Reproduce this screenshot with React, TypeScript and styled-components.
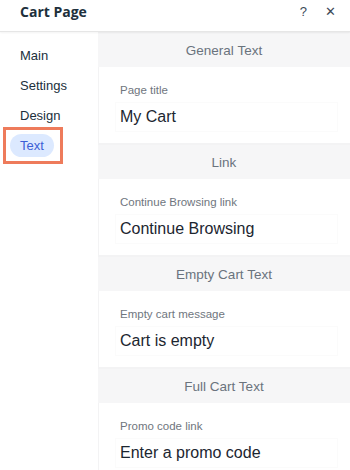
import styled, {createGlobalStyle} from "styled-components";

const GlobalStyle = createGlobalStyle`
  html, body {
    margin: 0;
    padding: 0;
    background: #ffffff;
    font-family: "Liberation Sans", Arial, sans-serif;
  }
`;

const Panel = styled.div`
  width: 350px;
  height: 470px;
  display: flex;
  flex-direction: column;
  overflow: hidden;
  background: #ffffff;
`;

const Header = styled.div`
  height: 31px;
  flex-shrink: 0;
  display: flex;
  align-items: center;
  padding: 0 14px 0 20px;
  border-bottom: 1px solid #e6e6e6;
  box-shadow: 0 1px 2px rgba(0, 0, 0, 0.05);
  position: relative;
  z-index: 1;
`;

const Title = styled.div`
  flex: 1;
  font-family: "Open Sans", "Liberation Sans", sans-serif;
  font-weight: 700;
  font-size: 14px;
  color: #20303c;
  margin-top: -8px;
`;

const HeaderBtn = styled.span`
  color: #3d4a57;
  font-size: 13px;
  margin-left: 18px;
  margin-top: -8px;
`;

const Body = styled.div`
  flex: 1;
  display: flex;
  min-height: 0;
`;

const Side = styled.div`
  width: 98px;
  flex-shrink: 0;
  display: flex;
  flex-direction: column;
  padding-top: 8px;
  background: #ffffff;
`;

const NavItem = styled.div`
  height: 30px;
  display: flex;
  align-items: center;
  padding-left: 10px;
`;

const NavLabel = styled.span<{ $active?: boolean }>`
  font-size: 13px;
  color: ${p => (p.$active ? "#3d5fd6" : "#20303c")};
  background: ${p => (p.$active ? "#dce9ff" : "transparent")};
  border-radius: 12px;
  padding: 4px 10px;
  position: relative;
`;

const Highlight = styled.span`
  position: absolute;
  left: -7px;
  top: -7px;
  right: -9px;
  bottom: -7px;
  border: 3px solid #ee7b5b;
`;

const Content = styled.div`
  flex: 1;
  background: #f3f3f4;
  display: flex;
  flex-direction: column;
  gap: 2px;
  padding-top: 1px;
`;

const Section = styled.div`
  display: flex;
  flex-direction: column;
`;

const SectionTitle = styled.div`
  height: 34px;
  display: flex;
  align-items: center;
  justify-content: center;
  font-size: 13.5px;
  color: #6a737d;
  background: #f6f6f7;
`;

const Card = styled.div`
  height: 76px;
  background: #ffffff;
  margin-left: 1px;
  padding: 17px 12px 0 21px;
  box-sizing: border-box;
`;

const FieldLabel = styled.div`
  font-size: 11.5px;
  color: #6f767e;
  margin-bottom: 6px;
`;

const FieldValue = styled.div`
  font-size: 16px;
  color: #1c2630;
  height: 28px;
  line-height: 28px;
  margin-left: -5px;
  padding-left: 4px;
  border: 1px solid #fbfbfb;
`;

const nav = ["Main", "Settings", "Design", "Text"];

const sections = [
  {title: "General Text", label: "Page title", value: "My Cart"},
  {title: "Link", label: "Continue Browsing link", value: "Continue Browsing"},
  {title: "Empty Cart Text", label: "Empty cart message", value: "Cart is empty"},
  {title: "Full Cart Text", label: "Promo code link", value: "Enter a promo code"},
];

const App = () => {
  return (
    <>
      <GlobalStyle/>
      <Panel>
        <Header>
          <Title>Cart Page</Title>
          <HeaderBtn>?</HeaderBtn>
          <HeaderBtn>✕</HeaderBtn>
        </Header>
        <Body>
          <Side>
            {nav.map(item => (
              <NavItem key={item}>
                <NavLabel $active={item === "Text"}>
                  {item}
                  {item === "Text" && <Highlight/>}
                </NavLabel>
              </NavItem>
            ))}
          </Side>
          <Content>
            {sections.map(s => (
              <Section key={s.title}>
                <SectionTitle>{s.title}</SectionTitle>
                <Card>
                  <FieldLabel>{s.label}</FieldLabel>
                  <FieldValue>{s.value}</FieldValue>
                </Card>
              </Section>
            ))}
          </Content>
        </Body>
      </Panel>
    </>
  );
};

export default App;
